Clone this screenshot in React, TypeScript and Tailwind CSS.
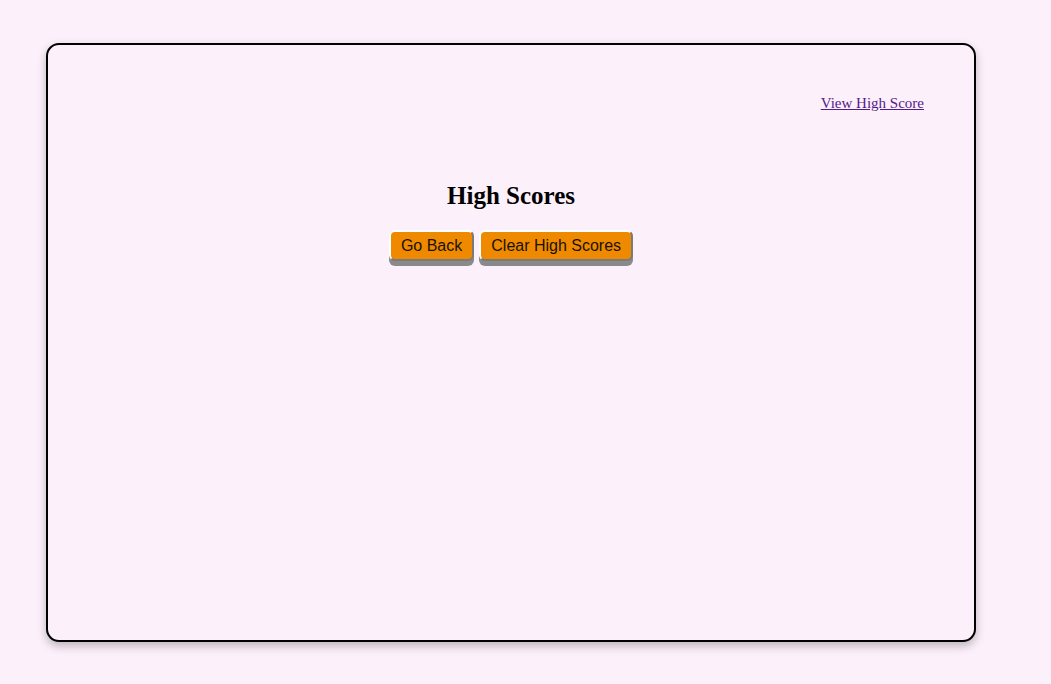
import React from 'react';

const Button: React.FC<{ children: React.ReactNode }> = ({ children }) => (
  <button className="h-[31px] px-[10px] pt-[1px] rounded-[6px] bg-[#ef8a00] text-[16px] text-[#1a1200] font-['Liberation_Sans',Arial,sans-serif] border-2 border-t-white border-l-white border-r-[#7a7a7a] border-b-[#7a7a7a] shadow-[0_5px_0_#8a8a8a]">
    {children}
  </button>
);

export default function App() {
  return (
    <div className="min-h-screen bg-[#fcf0fa] pt-[43px] pl-[46px]">
      <div className="w-[930px] h-[599px] border-2 border-black rounded-[13px] bg-[#fcf0fa] shadow-[0_4px_10px_rgba(0,0,0,0.25)] flex flex-col">
        <div className="flex justify-end pr-[50px] pt-[50px] leading-[17px]">
          <a href="#" className="text-[15px] text-[#551a8b] underline font-['Liberation_Serif','Times_New_Roman',serif]">
            View High Score
          </a>
        </div>
        <h1 className="mt-[69px] text-center text-[25px] leading-[30px] font-bold font-['Liberation_Serif',Garamond,serif]">High Scores</h1>
        <div className="mt-[19px] flex justify-center gap-[5px]">
          <Button>Go Back</Button>
          <Button>Clear High Scores</Button>
        </div>
      </div>
    </div>
  );
}
